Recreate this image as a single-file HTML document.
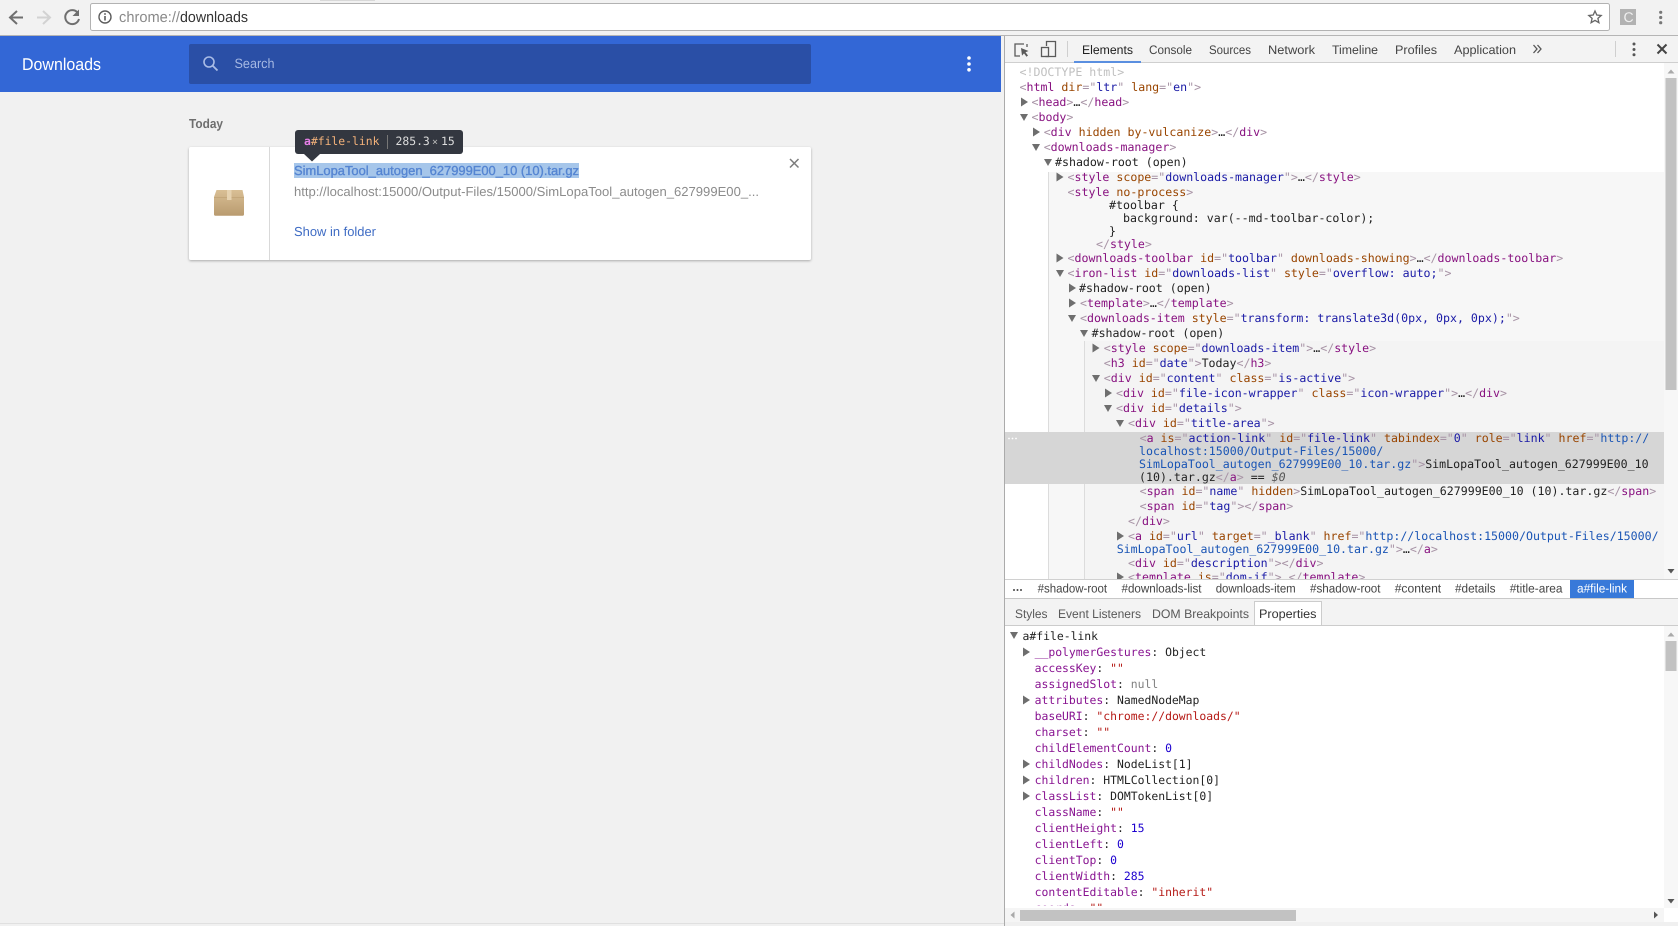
<!DOCTYPE html>
<html lang="en"><head><meta charset="utf-8"><title>Downloads</title>
<style>
html,body{margin:0;padding:0;width:1678px;height:926px;overflow:hidden;background:#f1f1f1}
svg{display:block;position:absolute;left:0;top:0}
text{white-space:pre;font-family:"Liberation Sans",sans-serif;text-rendering:geometricPrecision}
.m text{font-family:"DejaVu Sans Mono","Liberation Mono",monospace;font-size:11.6px;fill:#222}
.p text{font-family:"DejaVu Sans Mono","Liberation Mono",monospace;font-size:11.42px;fill:#222}
.t{fill:#881280}.b{fill:#a894a6}.n{fill:#994500}.v{fill:#1a1aa6}.l{fill:#1a55b5}
.k{fill:#881391}.s{fill:#b51a16}.d{fill:#1c00cf}.g{fill:#808080}
.u text{font-size:12.4px;fill:#444}
</style></head><body>
<svg width="1678" height="926" viewBox="0 0 1678 926" xmlns="http://www.w3.org/2000/svg">
<defs>
<clipPath id="c1"><rect x="1005" y="63" width="659" height="516"/></clipPath>
<clipPath id="c2"><rect x="1005" y="626" width="659" height="280"/></clipPath>
<linearGradient id="box" x1="0" y1="0" x2="0" y2="1"><stop offset="0" stop-color="#d9bf95"/><stop offset="1" stop-color="#b99b6f"/></linearGradient>
<filter id="sh" x="-5%" y="-5%" width="110%" height="115%"><feDropShadow dx="0" dy="1" stdDeviation="1.2" flood-color="#000" flood-opacity=".3"/></filter>
</defs>

<!-- browser toolbar -->
<rect width="1678" height="36" fill="#f2f2f2"/>
<rect x="320" y="0" width="55" height="1" fill="#d8d8d8"/>
<rect x="0" y="35" width="1678" height="1" fill="#b5b5b5"/>
<path d="M23 17.5H11M17 11l-7 6.5 7 6.5" fill="none" stroke="#6f6f6f" stroke-width="2"/>
<path d="M37 17.5H49M43 11l7 6.5-7 6.5" fill="none" stroke="#d2d2d2" stroke-width="2"/>
<path d="M77.5 12.5A7 7 0 1 0 79 19" fill="none" stroke="#6f6f6f" stroke-width="2"/>
<path d="M79 9.5v6.5h-6.5z" fill="#6f6f6f"/>
<rect x="90.5" y="3.5" width="1519" height="27" rx="2" fill="#fff" stroke="#b2b2b2"/>
<circle cx="105" cy="17" r="6" fill="none" stroke="#5c5c5c" stroke-width="1.4"/>
<rect x="104.2" y="16" width="1.6" height="4.5" fill="#5c5c5c"/><rect x="104.2" y="13.2" width="1.6" height="1.6" fill="#5c5c5c"/>
<text x="119" y="22" font-size="15" fill="#8a8a8a" textLength="61" lengthAdjust="spacingAndGlyphs">chrome://</text>
<text x="180" y="22" font-size="15" fill="#333" textLength="68" lengthAdjust="spacingAndGlyphs">downloads</text>
<path d="M1595 11l1.800 4 4.400.5-3.300 2.900 1 4.300-3.900-2.300-3.900 2.300 1-4.300-3.300-2.900 4.400-.5z" fill="none" stroke="#666" stroke-width="1.300"/>
<rect x="1620" y="9" width="16" height="16" fill="#b2b2b2"/>
<text x="1623.5" y="22" font-size="14" fill="#f0f0f0">C</text>
<g fill="#777"><circle cx="1660.7" cy="12.3" r="1.6"/><circle cx="1660.7" cy="17.5" r="1.6"/><circle cx="1660.7" cy="22.7" r="1.6"/></g>

<!-- downloads page -->
<rect x="0" y="36" width="1001" height="56" fill="#3367d6"/>
<text x="22" y="70" font-size="17" fill="#fff" textLength="79" lengthAdjust="spacingAndGlyphs">Downloads</text>
<rect x="189" y="44" width="622" height="40" rx="2" fill="#2a4fa6"/>
<circle cx="209" cy="62" r="5" fill="none" stroke="#a9bce6" stroke-width="1.6"/>
<path d="M212.7 65.7l4.8 4.8" stroke="#a9bce6" stroke-width="1.8"/>
<text x="234.500" y="68" font-size="13.5" fill="#a5b8e3" textLength="40" lengthAdjust="spacingAndGlyphs">Search</text>
<g fill="#fff"><circle cx="969" cy="58" r="1.8"/><circle cx="969" cy="64" r="1.8"/><circle cx="969" cy="69.8" r="1.8"/></g>
<text x="189" y="128" font-size="13" font-weight="bold" fill="#6e6e6e" textLength="34" lengthAdjust="spacingAndGlyphs">Today</text>
<rect x="189" y="147" width="622" height="113" rx="2" fill="#fff" filter="url(#sh)"/>
<rect x="269" y="147" width="1" height="113" fill="#d9d9d9"/>
<path d="M216.500 190h26l1.500 7v17.500a1.200 1.200 0 0 1-1.200 1.200h-27.600a1.200 1.200 0 0 1-1.200-1.200V197z" fill="url(#box)"/>
<rect x="214" y="197" width="30" height="1" fill="#c4a77b"/>
<rect x="227" y="190" width="4.500" height="10" fill="#e6d2b0"/>
<rect x="294" y="163" width="285" height="15" fill="#a6c6ea"/>
<text x="294" y="175" font-size="13" fill="#5585d2" stroke="#5585d2" stroke-width=".35" textLength="285" lengthAdjust="spacingAndGlyphs">SimLopaTool_autogen_627999E00_10 (10).tar.gz</text>
<text x="294" y="196" font-size="13" fill="#8c8c8c" textLength="465" lengthAdjust="spacingAndGlyphs">http://localhost:15000/Output-Files/15000/SimLopaTool_autogen_627999E00_...</text>
<text x="294" y="236" font-size="13" fill="#3f6cc4" textLength="82" lengthAdjust="spacingAndGlyphs">Show in folder</text>
<path d="M790 159l8.500 8.500M798.500 159l-8.500 8.500" stroke="#7c7c7c" stroke-width="1.500"/>
<rect x="295" y="130" width="168" height="24" rx="3" fill="#333740"/>
<path d="M304 154h16l-8 7.500z" fill="#333740"/>
<text x="304" y="145" font-size="11.4" style="font-family:'DejaVu Sans Mono',monospace" fill="#f4b27a"><tspan fill="#e67fe6" font-weight="bold">a</tspan>#file-link</text>
<text x="395.500" y="145" font-size="11.4" style="font-family:'DejaVu Sans Mono',monospace" fill="#dcdcdc">285.3</text>
<text x="432" y="145" font-size="10" style="font-family:'DejaVu Sans Mono',monospace" fill="#b8b8b8">×</text>
<text x="441" y="145" font-size="11.4" style="font-family:'DejaVu Sans Mono',monospace" fill="#dcdcdc">15</text>
<rect x="387" y="135" width="1" height="14" fill="#777"/>

<!-- devtools frame -->
<rect x="1001" y="36" width="3" height="890" fill="#f2f2f2"/>
<rect x="1004" y="36" width="674" height="890" fill="#fff"/>
<rect x="1004" y="36" width="1" height="890" fill="#ababab"/>
<rect x="1005" y="36" width="673" height="26" fill="#f3f3f3"/>
<rect x="1005" y="62" width="673" height="1" fill="#cfcfcf"/>
<!-- inspect icon -->
<path d="M1024 44h-9v12h5" fill="none" stroke="#5a5a5a" stroke-width="1.300"/><path d="M1027 44v3" stroke="#5a5a5a" stroke-width="1.300"/>
<path d="M1021 48l7.500 3-3 1.200 2.500 3.300-1.500 1.200-2.500-3.300-2 2.200z" fill="#5a5a5a"/>
<!-- device icon -->
<path d="M1046.500 46v-4.500h9v15h-10" fill="none" stroke="#5a5a5a" stroke-width="1.300"/>
<rect x="1041.500" y="47.500" width="7" height="9" fill="none" stroke="#5a5a5a" stroke-width="1.300"/>
<rect x="1067" y="41" width="1" height="16" fill="#cfcfcf"/>
<g class="u">
<text x="1082" y="54" textLength="51" lengthAdjust="spacingAndGlyphs" style="fill:#222">Elements</text>
<text x="1149" y="54" textLength="43" lengthAdjust="spacingAndGlyphs">Console</text>
<text x="1209" y="54" textLength="42" lengthAdjust="spacingAndGlyphs">Sources</text>
<text x="1268" y="54" textLength="47" lengthAdjust="spacingAndGlyphs">Network</text>
<text x="1332" y="54" textLength="46" lengthAdjust="spacingAndGlyphs">Timeline</text>
<text x="1395" y="54" textLength="42" lengthAdjust="spacingAndGlyphs">Profiles</text>
<text x="1454" y="54" textLength="62" lengthAdjust="spacingAndGlyphs">Application</text>
</g>
<rect x="1074" y="61" width="67" height="2" fill="#5a8fe0"/>
<path d="M1533.500 45l3.500 4-3.500 4M1537.500 45l3.500 4-3.500 4" fill="none" stroke="#555" stroke-width="1.300"/>
<rect x="1615" y="41" width="1" height="16" fill="#cfcfcf"/>
<g fill="#555"><circle cx="1634" cy="44" r="1.500"/><circle cx="1634" cy="49.500" r="1.500"/><circle cx="1634" cy="54.800" r="1.500"/></g>
<path d="M1657.500 44.500l9 9M1666.500 44.500l-9 9" stroke="#444" stroke-width="2"/>

<!-- elements shading -->
<rect x="1048" y="172" width="616" height="407" fill="#f7f7f7"/>
<rect x="1084" y="341" width="580" height="238" fill="#f4f4f4"/>
<rect x="1048" y="172" width="1" height="407" fill="#dcdcdc"/>
<rect x="1084" y="341" width="1" height="238" fill="#dcdcdc"/>
<rect x="1005" y="432" width="659" height="52" fill="#d6d6d6"/>
<g fill="#fff"><circle cx="1009" cy="438.500" r=".9"/><circle cx="1012.500" cy="438.500" r=".9"/><circle cx="1016" cy="438.500" r=".9"/></g>
<!-- elements scrollbar -->
<rect x="1664" y="63" width="14" height="516" fill="#f7f7f7"/>
<rect x="1665.500" y="78" width="11" height="312" fill="#c2c2c2"/>
<path d="M1667.500 73.500l3.500-4 3.500 4z" fill="#a9a9a9"/>
<path d="M1667.500 569l3.500 4.500 3.500-4.500z" fill="#555"/>

<g clip-path="url(#c1)">
<g fill="#6e6e6e">
<path d="M1021 97.500l7 4.500-7 4.500z"/>
<path d="M1020 114h8l-4 7z"/>
<path d="M1033 127.500l7 4.500-7 4.500z"/>
<path d="M1032 144h8l-4 7z"/>
<path d="M1044 159h8l-4 7z"/>
<path d="M1056.500 172.500l7 4.500-7 4.500z"/>
<path d="M1056.500 253.500l7 4.500-7 4.500z"/>
<path d="M1056 270h8l-4 7z"/>
<path d="M1069 283.500l7 4.500-7 4.500z"/>
<path d="M1069 298.500l7 4.500-7 4.500z"/>
<path d="M1068 315h8l-4 7z"/>
<path d="M1080 330h8l-4 7z"/>
<path d="M1092.500 343.500l7 4.500-7 4.500z"/>
<path d="M1092 375h8l-4 7z"/>
<path d="M1105 388.500l7 4.500-7 4.500z"/>
<path d="M1104 405h8l-4 7z"/>
<path d="M1116 420h8l-4 7z"/>
<path d="M1117 531.500l7 4.500-7 4.500z"/>
<path d="M1117 572.500l7 4.500-7 4.500z"/>
</g>
<g class="m">
<text x="1019.500" y="76" style="fill:#c0c0c0">&lt;!DOCTYPE html&gt;</text>
<text x="1019.500" y="91"><tspan class="b">&lt;</tspan><tspan class="t">html</tspan> <tspan class="n">dir</tspan><tspan class="b">="</tspan><tspan class="v">ltr</tspan><tspan class="b">"</tspan> <tspan class="n">lang</tspan><tspan class="b">="</tspan><tspan class="v">en</tspan><tspan class="b">"&gt;</tspan></text>
<text x="1031.500" y="106"><tspan class="b">&lt;</tspan><tspan class="t">head</tspan><tspan class="b">&gt;</tspan>…<tspan class="b">&lt;/</tspan><tspan class="t">head</tspan><tspan class="b">&gt;</tspan></text>
<text x="1031.500" y="121"><tspan class="b">&lt;</tspan><tspan class="t">body</tspan><tspan class="b">&gt;</tspan></text>
<text x="1043.700" y="136"><tspan class="b">&lt;</tspan><tspan class="t">div</tspan> <tspan class="n">hidden</tspan> <tspan class="n">by-vulcanize</tspan><tspan class="b">&gt;</tspan>…<tspan class="b">&lt;/</tspan><tspan class="t">div</tspan><tspan class="b">&gt;</tspan></text>
<text x="1043.700" y="151"><tspan class="b">&lt;</tspan><tspan class="t">downloads-manager</tspan><tspan class="b">&gt;</tspan></text>
<text x="1055" y="166">#shadow-root (open)</text>
<text x="1067.500" y="181"><tspan class="b">&lt;</tspan><tspan class="t">style</tspan> <tspan class="n">scope</tspan><tspan class="b">="</tspan><tspan class="v">downloads-manager</tspan><tspan class="b">"&gt;</tspan>…<tspan class="b">&lt;/</tspan><tspan class="t">style</tspan><tspan class="b">&gt;</tspan></text>
<text x="1067.500" y="196"><tspan class="b">&lt;</tspan><tspan class="t">style</tspan> <tspan class="n">no-process</tspan><tspan class="b">&gt;</tspan></text>
<text x="1109" y="209">#toolbar {</text>
<text x="1123" y="222">background: var(--md-toolbar-color);</text>
<text x="1109" y="235">}</text>
<text x="1096" y="248"><tspan class="b">&lt;/</tspan><tspan class="t">style</tspan><tspan class="b">&gt;</tspan></text>
<text x="1067.500" y="262"><tspan class="b">&lt;</tspan><tspan class="t">downloads-toolbar</tspan> <tspan class="n">id</tspan><tspan class="b">="</tspan><tspan class="v">toolbar</tspan><tspan class="b">"</tspan> <tspan class="n">downloads-showing</tspan><tspan class="b">&gt;</tspan>…<tspan class="b">&lt;/</tspan><tspan class="t">downloads-toolbar</tspan><tspan class="b">&gt;</tspan></text>
<text x="1067.500" y="277"><tspan class="b">&lt;</tspan><tspan class="t">iron-list</tspan> <tspan class="n">id</tspan><tspan class="b">="</tspan><tspan class="v">downloads-list</tspan><tspan class="b">"</tspan> <tspan class="n">style</tspan><tspan class="b">="</tspan><tspan class="v">overflow: auto;</tspan><tspan class="b">"&gt;</tspan></text>
<text x="1079" y="292">#shadow-root (open)</text>
<text x="1080" y="307"><tspan class="b">&lt;</tspan><tspan class="t">template</tspan><tspan class="b">&gt;</tspan>…<tspan class="b">&lt;/</tspan><tspan class="t">template</tspan><tspan class="b">&gt;</tspan></text>
<text x="1080" y="322"><tspan class="b">&lt;</tspan><tspan class="t">downloads-item</tspan> <tspan class="n">style</tspan><tspan class="b">="</tspan><tspan class="v">transform: translate3d(0px, 0px, 0px);</tspan><tspan class="b">"&gt;</tspan></text>
<text x="1091.600" y="337">#shadow-root (open)</text>
<text x="1103.800" y="352"><tspan class="b">&lt;</tspan><tspan class="t">style</tspan> <tspan class="n">scope</tspan><tspan class="b">="</tspan><tspan class="v">downloads-item</tspan><tspan class="b">"&gt;</tspan>…<tspan class="b">&lt;/</tspan><tspan class="t">style</tspan><tspan class="b">&gt;</tspan></text>
<text x="1103.800" y="367"><tspan class="b">&lt;</tspan><tspan class="t">h3</tspan> <tspan class="n">id</tspan><tspan class="b">="</tspan><tspan class="v">date</tspan><tspan class="b">"&gt;</tspan>Today<tspan class="b">&lt;/</tspan><tspan class="t">h3</tspan><tspan class="b">&gt;</tspan></text>
<text x="1103.800" y="382"><tspan class="b">&lt;</tspan><tspan class="t">div</tspan> <tspan class="n">id</tspan><tspan class="b">="</tspan><tspan class="v">content</tspan><tspan class="b">"</tspan> <tspan class="n">class</tspan><tspan class="b">="</tspan><tspan class="v">is-active</tspan><tspan class="b">"&gt;</tspan></text>
<text x="1116" y="397"><tspan class="b">&lt;</tspan><tspan class="t">div</tspan> <tspan class="n">id</tspan><tspan class="b">="</tspan><tspan class="v">file-icon-wrapper</tspan><tspan class="b">"</tspan> <tspan class="n">class</tspan><tspan class="b">="</tspan><tspan class="v">icon-wrapper</tspan><tspan class="b">"&gt;</tspan>…<tspan class="b">&lt;/</tspan><tspan class="t">div</tspan><tspan class="b">&gt;</tspan></text>
<text x="1116" y="412"><tspan class="b">&lt;</tspan><tspan class="t">div</tspan> <tspan class="n">id</tspan><tspan class="b">="</tspan><tspan class="v">details</tspan><tspan class="b">"&gt;</tspan></text>
<text x="1128" y="427"><tspan class="b">&lt;</tspan><tspan class="t">div</tspan> <tspan class="n">id</tspan><tspan class="b">="</tspan><tspan class="v">title-area</tspan><tspan class="b">"&gt;</tspan></text>
<text x="1139.600" y="442"><tspan class="b">&lt;</tspan><tspan class="t">a</tspan> <tspan class="n">is</tspan><tspan class="b">="</tspan><tspan class="v">action-link</tspan><tspan class="b">"</tspan> <tspan class="n">id</tspan><tspan class="b">="</tspan><tspan class="v">file-link</tspan><tspan class="b">"</tspan> <tspan class="n">tabindex</tspan><tspan class="b">="</tspan><tspan class="v">0</tspan><tspan class="b">"</tspan> <tspan class="n">role</tspan><tspan class="b">="</tspan><tspan class="v">link</tspan><tspan class="b">"</tspan> <tspan class="n">href</tspan><tspan class="b">="</tspan><tspan class="l">http://</tspan></text>
<text x="1139" y="455" class="l" style="fill:#1a55b5">localhost:15000/Output-Files/15000/</text>
<text x="1139" y="468"><tspan class="l">SimLopaTool_autogen_627999E00_10.tar.gz</tspan><tspan class="b">"&gt;</tspan>SimLopaTool_autogen_627999E00_10</text>
<text x="1139" y="481">(10).tar.gz<tspan class="b">&lt;/</tspan><tspan class="t">a</tspan><tspan class="b">&gt;</tspan> == <tspan font-style="italic" fill="#555">$0</tspan></text>
<text x="1139.600" y="495"><tspan class="b">&lt;</tspan><tspan class="t">span</tspan> <tspan class="n">id</tspan><tspan class="b">="</tspan><tspan class="v">name</tspan><tspan class="b">"</tspan> <tspan class="n">hidden</tspan><tspan class="b">&gt;</tspan>SimLopaTool_autogen_627999E00_10 (10).tar.gz<tspan class="b">&lt;/</tspan><tspan class="t">span</tspan><tspan class="b">&gt;</tspan></text>
<text x="1139.600" y="510"><tspan class="b">&lt;</tspan><tspan class="t">span</tspan> <tspan class="n">id</tspan><tspan class="b">="</tspan><tspan class="v">tag</tspan><tspan class="b">"&gt;&lt;/</tspan><tspan class="t">span</tspan><tspan class="b">&gt;</tspan></text>
<text x="1128" y="525"><tspan class="b">&lt;/</tspan><tspan class="t">div</tspan><tspan class="b">&gt;</tspan></text>
<text x="1128" y="540"><tspan class="b">&lt;</tspan><tspan class="t">a</tspan> <tspan class="n">id</tspan><tspan class="b">="</tspan><tspan class="v">url</tspan><tspan class="b">"</tspan> <tspan class="n">target</tspan><tspan class="b">="</tspan><tspan class="v">_blank</tspan><tspan class="b">"</tspan> <tspan class="n">href</tspan><tspan class="b">="</tspan><tspan class="l">http://localhost:15000/Output-Files/15000/</tspan></text>
<text x="1116.700" y="553"><tspan class="l">SimLopaTool_autogen_627999E00_10.tar.gz</tspan><tspan class="b">"&gt;</tspan>…<tspan class="b">&lt;/</tspan><tspan class="t">a</tspan><tspan class="b">&gt;</tspan></text>
<text x="1128" y="567"><tspan class="b">&lt;</tspan><tspan class="t">div</tspan> <tspan class="n">id</tspan><tspan class="b">="</tspan><tspan class="v">description</tspan><tspan class="b">"&gt;&lt;/</tspan><tspan class="t">div</tspan><tspan class="b">&gt;</tspan></text>
<text x="1128" y="581"><tspan class="b">&lt;</tspan><tspan class="t">template</tspan> <tspan class="n">is</tspan><tspan class="b">="</tspan><tspan class="v">dom-if</tspan><tspan class="b">"&gt;</tspan>…<tspan class="b">&lt;/</tspan><tspan class="t">template</tspan><tspan class="b">&gt;</tspan></text>
</g>
</g>

<!-- breadcrumbs -->
<rect x="1005" y="579" width="673" height="19" fill="#fff"/>
<rect x="1005" y="579" width="673" height="1" fill="#d0d0d0"/>
<rect x="1005" y="598" width="673" height="1" fill="#c8c8c8"/>
<g fill="#444"><circle cx="1014" cy="590" r="1"/><circle cx="1017.500" cy="590" r="1"/><circle cx="1021" cy="590" r="1"/></g>
<rect x="1570" y="580" width="64" height="18" fill="#3879d9"/>
<g class="u">
<text x="1037.600" y="592.500" textLength="69.500" lengthAdjust="spacingAndGlyphs">#shadow-root</text>
<text x="1121.500" y="592.500" textLength="80" lengthAdjust="spacingAndGlyphs">#downloads-list</text>
<text x="1215.700" y="592.500" textLength="80" lengthAdjust="spacingAndGlyphs">downloads-item</text>
<text x="1310" y="592.500" textLength="70.500" lengthAdjust="spacingAndGlyphs">#shadow-root</text>
<text x="1394.700" y="592.500" textLength="46.500" lengthAdjust="spacingAndGlyphs">#content</text>
<text x="1455" y="592.500" textLength="40.500" lengthAdjust="spacingAndGlyphs">#details</text>
<text x="1509.700" y="592.500" textLength="52.800" lengthAdjust="spacingAndGlyphs">#title-area</text>
<text x="1577" y="592.500" textLength="50" lengthAdjust="spacingAndGlyphs" style="fill:#fff">a#file-link</text>
</g>

<!-- sidebar tabs -->
<rect x="1005" y="599" width="673" height="26" fill="#f3f3f3"/>
<rect x="1005" y="625" width="673" height="1" fill="#cccccc"/>
<rect x="1254.500" y="601.500" width="67" height="24" fill="#fff" stroke="#cccccc"/>
<g class="u">
<text x="1015" y="618" textLength="32.500" lengthAdjust="spacingAndGlyphs" style="fill:#5a5a5a">Styles</text>
<text x="1058" y="618" textLength="83" lengthAdjust="spacingAndGlyphs" style="fill:#5a5a5a">Event Listeners</text>
<text x="1152" y="618" textLength="97" lengthAdjust="spacingAndGlyphs" style="fill:#5a5a5a">DOM Breakpoints</text>
<text x="1259" y="618" textLength="57.500" lengthAdjust="spacingAndGlyphs" style="fill:#333">Properties</text>
</g>

<!-- properties -->
<g clip-path="url(#c2)">
<g fill="#6e6e6e">
<path d="M1010 632h8l-4 7z"/>
<path d="M1023 647.500l7 4.500-7 4.500z"/>
<path d="M1023 695.500l7 4.500-7 4.500z"/>
<path d="M1023 759.500l7 4.500-7 4.500z"/>
<path d="M1023 775.500l7 4.500-7 4.500z"/>
<path d="M1023 791.500l7 4.500-7 4.500z"/>
</g>
<g class="p">
<text x="1022.500" y="640">a#file-link</text>
<text x="1034.600" y="656"><tspan class="k">__polymerGestures</tspan>: Object</text>
<text x="1034.600" y="672"><tspan class="k">accessKey</tspan>: <tspan class="s">""</tspan></text>
<text x="1034.600" y="688"><tspan class="k">assignedSlot</tspan>: <tspan class="g">null</tspan></text>
<text x="1034.600" y="704"><tspan class="k">attributes</tspan>: NamedNodeMap</text>
<text x="1034.600" y="720"><tspan class="k">baseURI</tspan>: <tspan class="s">"chrome://downloads/"</tspan></text>
<text x="1034.600" y="736"><tspan class="k">charset</tspan>: <tspan class="s">""</tspan></text>
<text x="1034.600" y="752"><tspan class="k">childElementCount</tspan>: <tspan class="d">0</tspan></text>
<text x="1034.600" y="768"><tspan class="k">childNodes</tspan>: NodeList[1]</text>
<text x="1034.600" y="784"><tspan class="k">children</tspan>: HTMLCollection[0]</text>
<text x="1034.600" y="800"><tspan class="k">classList</tspan>: DOMTokenList[0]</text>
<text x="1034.600" y="816"><tspan class="k">className</tspan>: <tspan class="s">""</tspan></text>
<text x="1034.600" y="832"><tspan class="k">clientHeight</tspan>: <tspan class="d">15</tspan></text>
<text x="1034.600" y="848"><tspan class="k">clientLeft</tspan>: <tspan class="d">0</tspan></text>
<text x="1034.600" y="864"><tspan class="k">clientTop</tspan>: <tspan class="d">0</tspan></text>
<text x="1034.600" y="880"><tspan class="k">clientWidth</tspan>: <tspan class="d">285</tspan></text>
<text x="1034.600" y="896"><tspan class="k">contentEditable</tspan>: <tspan class="s">"inherit"</tspan></text>
<text x="1034.600" y="912"><tspan class="k">coords</tspan>: <tspan class="s">""</tspan></text>
</g>
</g>
<!-- properties scrollbars -->
<rect x="1664" y="626" width="14" height="282" fill="#f7f7f7"/>
<rect x="1665.500" y="641" width="11" height="30" fill="#c2c2c2"/>
<path d="M1667.500 636.500l3.500-4 3.500 4z" fill="#a9a9a9"/>
<path d="M1667.500 899l3.500 4.500 3.500-4.500z" fill="#555"/>
<rect x="1005" y="908" width="659" height="14" fill="#f5f5f5"/>
<rect x="1020" y="910" width="276" height="11" fill="#c2c2c2"/>
<path d="M1014.500 911.500l-4 3.500 4 3.500z" fill="#a9a9a9"/>
<path d="M1654 911.500l4 3.500-4 3.500z" fill="#555"/>
<rect x="1005" y="922" width="673" height="4" fill="#f0f0f0"/>
<rect x="0" y="923" width="1004" height="1" fill="#e0e0e0"/>
<rect x="1004" y="36" width="1" height="890" fill="#ababab"/>
</svg>
</body></html>
